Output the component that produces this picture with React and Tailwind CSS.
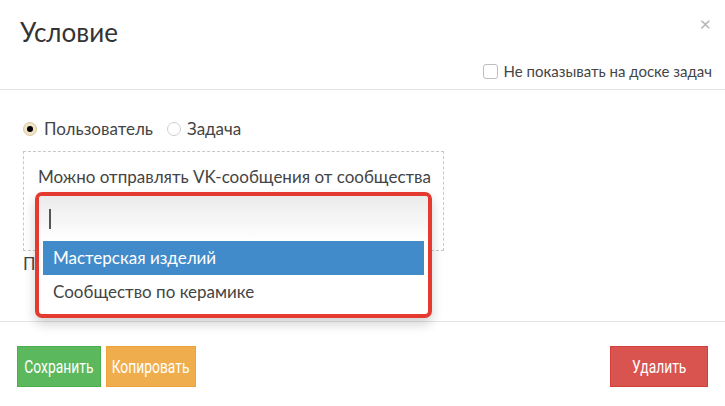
import React, { useState } from 'react';

const options = ['Мастерская изделий', 'Сообщество по керамике'];

export default function App() {
    const [target, setTarget] = useState('user');
    const [hidden, setHidden] = useState(false);
    const [active, setActive] = useState(0);

    return (
        <div className="w-[725px] h-[406px] bg-white text-[#333] overflow-hidden font-['Lato',sans-serif]">
            {/* HEADER */}
            <div className="relative h-[90px] border-b border-[#e5e5e5] px-5 pt-[16px]">
                <h3 className="text-[26px] leading-[32px] text-[#333] font-normal">Условие</h3>
                <button className="absolute right-[14px] top-[13px] text-[#b5b5b5] text-[20px] leading-none">×</button>
                <label className="absolute right-[13px] top-[60px] flex items-center gap-[6px] text-[15px] text-[#444]">
                    <span
                        onClick={() => setHidden(!hidden)}
                        className="w-[15px] h-[15px] rounded-[3px] border border-[#bdbdbd] bg-white"
                    />
                    Не показывать на доске задач
                </label>
            </div>

            {/* BODY */}
            <div className="relative h-[231px] px-[23px] pt-[29px]">
                <div className="flex items-center text-[17px] text-[#444] h-[20px]">
                    <button onClick={() => setTarget('user')} className="flex items-center gap-[7px]">
                        <span className="w-[14px] h-[14px] rounded-full bg-[#f1e3c7] border border-[#dcc9a3] flex items-center justify-center">
                            <span className="w-[6px] h-[6px] rounded-full bg-black" />
                        </span>
                        Пользователь
                    </button>
                    <button onClick={() => setTarget('task')} className="flex items-center gap-[6px] ml-[14px]">
                        <span className="w-[14px] h-[14px] rounded-full border border-[#cfcfcf] bg-white" />
                        Задача
                    </button>
                </div>

                <div className="mt-[12px] w-[421px] h-[100px] border border-dashed border-[#c8c8c8] px-[14px] pt-[15px]">
                    <p className="text-[17px] leading-[20px] text-[#444] whitespace-nowrap">Можно отправлять VK-сообщения от сообщества</p>
                </div>
                <p className="mt-[3px] text-[17px] leading-[20px] text-[#444]">Получатель</p>

                {/* DROPDOWN */}
                <div className="absolute left-[35px] top-[102px] w-[397px] h-[126px] rounded-[7px] border-[4px] border-[#e53a2f] bg-white shadow-[0_6px_12px_rgba(0,0,0,0.18)] px-[4px]">
                    <div className="h-[45px] bg-gradient-to-b from-[#ebebeb] to-white flex items-center px-[10px] -mx-[4px] rounded-t-[3px]">
                        <span className="w-[2px] h-[20px] bg-[#555]" />
                    </div>
                    {options.map((o, i) => (
                        <div
                            key={o}
                            onMouseEnter={() => setActive(i)}
                            className={`h-[34px] flex items-center px-[10px] text-[17px] whitespace-nowrap ${active === i ? 'bg-[#428bca] text-white' : 'text-[#444]'}`}
                        >
                            {o}
                        </div>
                    ))}
                </div>
            </div>

            {/* FOOTER */}
            <div className="border-t border-[#e5e5e5] flex items-center justify-between px-[17px] pt-[24px] font-['Roboto',sans-serif]">
                <div className="flex gap-[5px]">
                    <button className="h-[41px] w-[84px] flex items-center justify-center bg-[#5cb85c] border border-[#4cae4c] text-white text-[18px] whitespace-nowrap">
                        <span className="inline-block shrink-0 scale-x-[0.77]">Сохранить</span>
                    </button>
                    <button className="h-[41px] w-[90px] flex items-center justify-center bg-[#f0ad4e] border border-[#eea236] text-white text-[18px] whitespace-nowrap">
                        <span className="inline-block shrink-0 scale-x-[0.77]">Копировать</span>
                    </button>
                </div>
                <button className="h-[41px] w-[98px] flex items-center justify-center bg-[#d9534f] border border-[#d43f3a] text-white text-[18px] whitespace-nowrap">
                    <span className="inline-block shrink-0 scale-x-[0.77]">Удалить</span>
                </button>
            </div>
        </div>
    );
}
